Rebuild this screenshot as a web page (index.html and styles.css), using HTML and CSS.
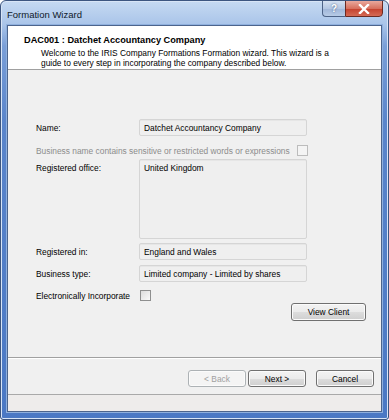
FILE: index.html
```html
<!DOCTYPE html>
<html>
<head>
<meta charset="utf-8">
<link rel="stylesheet" href="styles.css">
</head>
<body>
<div class="window">
  <div class="titlebar">
    <span class="title">Formation Wizard</span>
    <div class="controls">
      <div class="ctl help">?</div>
      <div class="ctl close">
        <svg width="12" height="10" viewBox="0 0 12 10"><path d="M2 1 L10 9 M10 1 L2 9" stroke="#fff" stroke-width="2.4" stroke-linecap="square"/></svg>
      </div>
    </div>
  </div>
  <div class="client">
    <div class="header">
      <div class="heading">DAC001 : Datchet Accountancy Company</div>
      <div class="intro">Welcome to the IRIS Company Formations Formation wizard. This wizard is a guide to every step in incorporating the company described below.</div>
    </div>
    <div class="body">
      <div class="row r-name">
        <span class="label">Name:</span>
        <div class="field">Datchet Accountancy Company</div>
      </div>
      <div class="row r-sensitive">
        <span class="label wide disabled">Business name contains sensitive or restricted words or expressions</span>
        <span class="check disabled-check"></span>
      </div>
      <div class="row r-office">
        <span class="label top">Registered office:</span>
        <div class="field area">United Kingdom</div>
      </div>
      <div class="row r-regin">
        <span class="label">Registered in:</span>
        <div class="field">England and Wales</div>
      </div>
      <div class="row r-type">
        <span class="label">Business type:</span>
        <div class="field">Limited company - Limited by shares</div>
      </div>
      <div class="row r-elec">
        <span class="label">Electronically Incorporate</span>
        <span class="check"></span>
      </div>
      <div class="row r-view">
        <button class="btn view">View Client</button>
      </div>
    </div>
    <div class="footer">
      <button class="btn disabled-btn">&lt; Back</button>
      <button class="btn next">Next &gt;</button>
      <button class="btn cancel">Cancel</button>
    </div>
    <div class="strip"></div>
  </div>
</div>
</body>
</html>
```
FILE: styles.css
```css
html, body {
  margin: 0;
  padding: 0;
  background: #fff;
}
.window {
  width: 389px;
  height: 420px;
  box-sizing: border-box;
  border: 1px solid #3d5680;
  border-radius: 6px 6px 3px 3px;
  background: linear-gradient(to bottom, #c6daf2 0px, #a9c4e9 24px, #7a9fd8 45px, #5a85cb 120px, #4a78c4 100%);
  box-shadow: inset 0 0 0 1px #d8e5f6;
  display: flex;
  flex-direction: column;
  padding: 0 6px 7px 6px;
  font-family: "Liberation Sans", Arial, sans-serif;
  font-size: 8.4px;
  color: #000;
  overflow: hidden;
}
.titlebar {
  height: 24px;
  display: flex;
  align-items: flex-start;
  flex: none;
}
.title {
  font-size: 9.5px;
  margin-top: 8px;
  color: #0f1a2a;
}
.controls {
  margin-left: auto;
  display: flex;
  margin-right: -1px;
  margin-top: -1px;
}
.ctl {
  height: 17px;
  box-sizing: border-box;
  border: 1px solid #4d6387;
  display: flex;
  align-items: center;
  justify-content: center;
}
.help {
  width: 23px;
  border-radius: 0 0 0 4px;
  border-right: none;
  background: linear-gradient(to bottom, #d5e1f1, #b4c7e3 50%, #9fb5d8 51%, #b7cbe6);
  color: #fff;
  font-weight: bold;
  font-size: 10px;
  text-shadow: 0 0 2px #3a5277;
}
.close {
  width: 38px;
  border-radius: 0 0 4px 0;
  background: linear-gradient(to bottom, #e9a99d, #d7705e 50%, #c4402c 51%, #d56a55);
  border-color: #6b2a22;
}
.client {
  flex: 1;
  background: #f0f0f0;
  border: 1px solid #4c648c;
  display: flex;
  flex-direction: column;
  box-shadow: 0 0 0 1px #8fb0de;
}
.header {
  height: 44px;
  flex: none;
  box-sizing: border-box;
  background: #fff;
  border-bottom: 1px solid #a0a0a0;
  padding: 9px 10px 0 16px;
}
.heading {
  font-weight: bold;
  font-size: 9.2px;
  line-height: 10px;
}
.intro {
  padding-left: 17px;
  padding-top: 3px;
  line-height: 10px;
  width: 300px;
}
.body {
  flex: 1;
  display: flex;
  flex-direction: column;
  padding: 0 0 0 28px;
}
.row {
  display: flex;
  align-items: center;
  width: 272px;
}
.label {
  width: 103px;
  flex: none;
  white-space: nowrap;
}
.label.wide {
  width: auto;
  flex: 1;
}
.label.top {
  align-self: flex-start;
  padding-top: 4px;
}
.disabled {
  color: #8c8c8c;
}
.field {
  width: 168px;
  height: 17px;
  box-sizing: border-box;
  border: 1px solid #d5d5d5;
  border-radius: 2px;
  background: #efefef;
  padding: 3px 0 0 4px;
  white-space: nowrap;
  box-shadow: inset 0 1px 0 #e6e6e6;
}
.field.area {
  height: 80px;
}
.check {
  width: 11px;
  height: 11px;
  box-sizing: border-box;
  border: 1px solid #8e8f8f;
  background: linear-gradient(135deg, #dcdcdc, #fafafa);
  flex: none;
}
.disabled-check {
  border-color: #bcbcbc;
  background: #f4f4f4;
}
.r-name { margin-top: 49px; }
.r-sensitive { margin-top: 9px; height: 11px; }
.r-office { margin-top: 3px; align-items: flex-start; }
.r-regin { margin-top: 4px; }
.r-type { margin-top: 5px; }
.r-elec { margin-top: 8px; }
.r-elec .label { width: 104px; }
.r-view { margin-top: 2px; justify-content: flex-end; width: 330px; }
.btn {
  font-family: "Liberation Sans", Arial, sans-serif;
  font-size: 8.4px;
  height: 18px;
  width: 75px;
  box-sizing: border-box;
  border: 1px solid #707070;
  border-radius: 3px;
  background: linear-gradient(to bottom, #f3f3f3 0%, #ebebeb 50%, #dddddd 51%, #cfcfcf 100%);
  box-shadow: inset 0 0 0 1px #fbfbfb;
  color: #000;
  padding: 0;
}
.footer {
  flex: none;
  height: 37px;
  box-sizing: border-box;
  border-top: 1px solid #a0a0a0;
  box-shadow: inset 0 1px 0 #fff;
  display: flex;
  justify-content: flex-end;
  align-items: flex-start;
  padding: 12px 7px 0 0;
}
.footer .btn { width: 58px; height: 17px; }
.footer .next { margin-left: 2px; }
.footer .cancel { margin-left: 10px; }
.disabled-btn {
  border-color: #adb2b5;
  background: #f4f4f4;
  color: #a0a0a0;
}
.strip {
  flex: none;
  height: 16px;
  border-top: 1px solid #a9a9a9;
  background: #eeeceb;
}
```
